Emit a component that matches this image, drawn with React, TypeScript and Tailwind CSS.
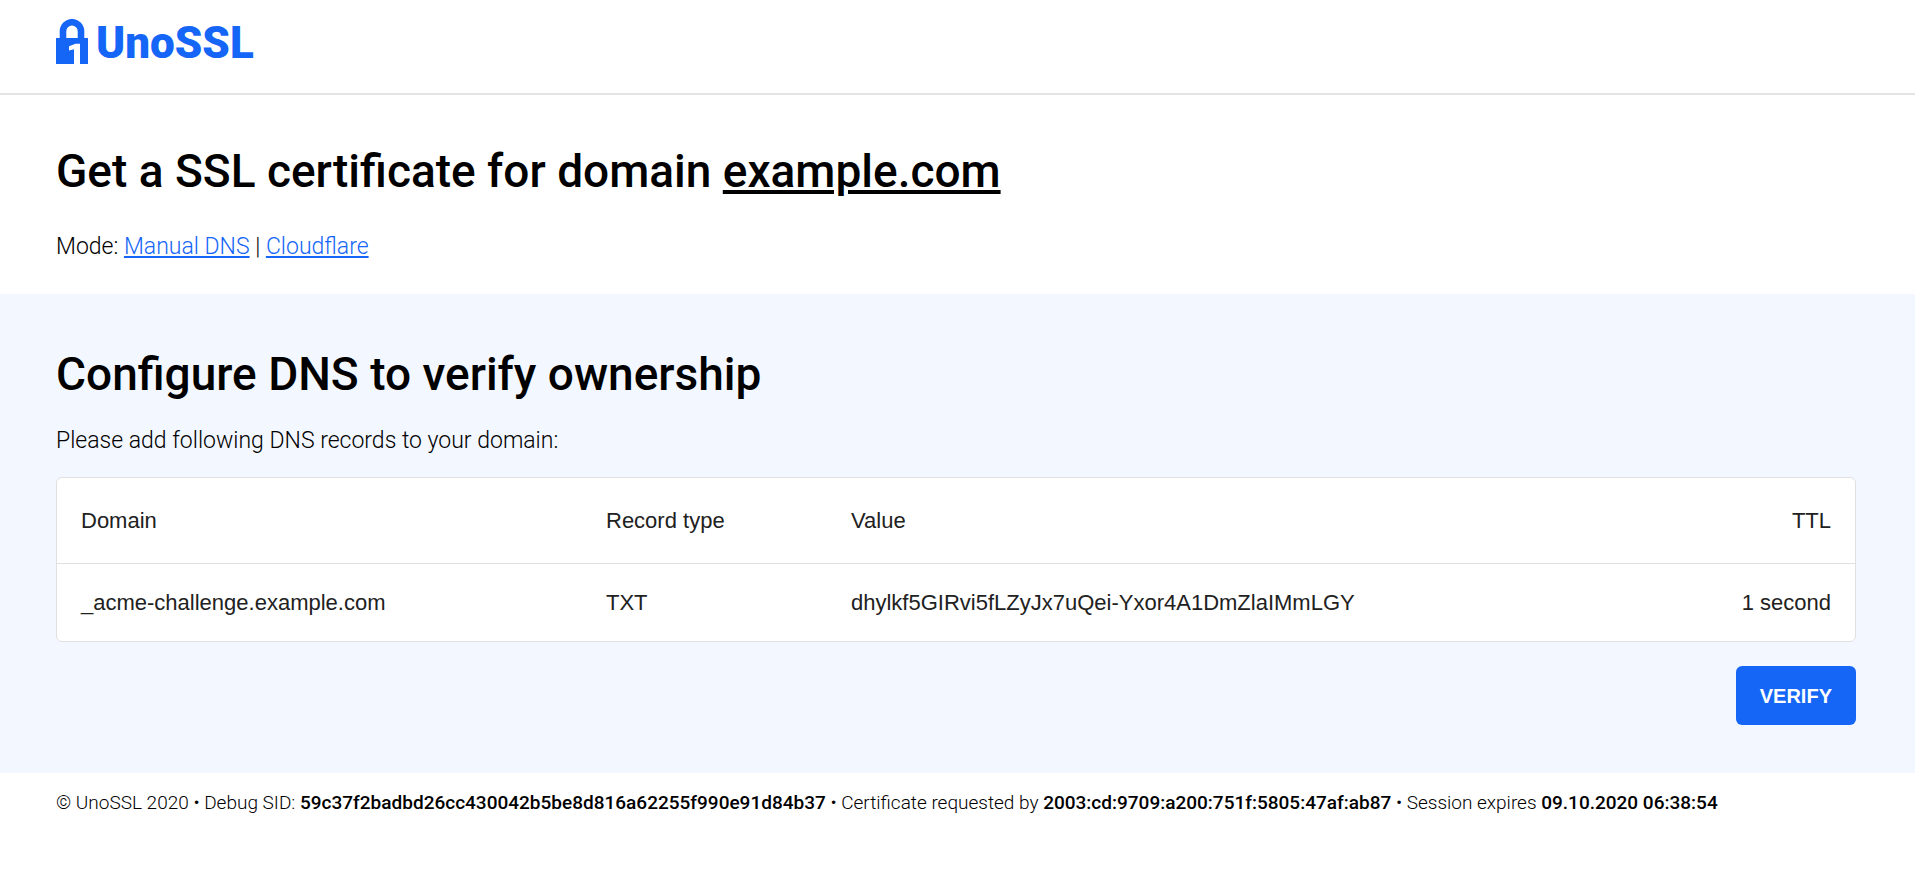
type DnsRecord = { domain: string; type: string; value: string; ttl: string }

const records: DnsRecord[] = [
  {
    domain: '_acme-challenge.example.com',
    type: 'TXT',
    value: 'dhylkf5GIRvi5fLZyJx7uQei-Yxor4A1DmZlaIMmLGY',
    ttl: '1 second',
  },
]

function LockLogo() {
  return (
    <svg className="mt-1" width="32" height="45" viewBox="0 0 32 45" aria-hidden="true">
      <path d="M7 20v-7.8a9 9 0 0 1 18 0V20" fill="none" stroke="#1566f7" strokeWidth="6.6" />
      <path d="M0 19h32v26H0z" fill="#1566f7" />
      <path d="M18 45V30.3l-5 1.2v-4.2l6.6-2.6H24V45z" fill="#fff" />
    </svg>
  )
}

export default function App() {
  return (
    <div className="min-h-svh bg-white font-['Roboto',sans-serif] text-black">
      {/* Header */}
      <header className="flex border-b-2 border-[#e4e4e4] px-14 pt-[15px] pb-[22px]">
        <a href="#" className="flex items-start gap-2 text-[#1566f7]">
          <LockLogo />
          <span className="text-[44px] leading-[56px] font-black">UnoSSL</span>
        </a>
      </header>

      {/* Domain */}
      <section className="px-14 pt-12 pb-[29px]">
        <h1 className="text-[46px] leading-[56px] font-medium">
          Get a SSL certificate for domain <span className="underline">example.com</span>
        </h1>
        <p className="mt-[30px] text-[23px] leading-9 font-light">
          Mode: <a href="#" className="text-[#1566f7] underline">Manual DNS</a> |{' '}
          <a href="#" className="text-[#1566f7] underline">Cloudflare</a>
        </p>
      </section>

      {/* DNS records */}
      <section className="bg-[#f3f7ff] pt-[52px] pr-[59px] pb-12 pl-14">
        <h2 className="text-[46px] leading-[56px] font-medium">Configure DNS to verify ownership</h2>
        <p className="mt-[21px] text-[23px] leading-9 font-light">Please add following DNS records to your domain:</p>

        <div className="mt-[18px] overflow-hidden rounded-md border border-[#e0e0e0] bg-white">
          <table className="w-full font-['Liberation_Sans',Arial,sans-serif] text-[22px] text-[#212121]">
            <thead>
              <tr className="h-[85px] text-left">
                <th className="w-[525px] px-6 font-normal">Domain</th>
                <th className="w-[245px] px-6 font-normal">Record type</th>
                <th className="px-6 font-normal">Value</th>
                <th className="px-6 text-right font-normal">TTL</th>
              </tr>
            </thead>
            <tbody>
              {records.map(r => (
                <tr key={r.domain} className="h-[78px] border-t border-[#e0e0e0]">
                  <td className="px-6">{r.domain}</td>
                  <td className="px-6">{r.type}</td>
                  <td className="px-6">{r.value}</td>
                  <td className="px-6 text-right">{r.ttl}</td>
                </tr>
              ))}
            </tbody>
          </table>
        </div>

        <div className="mt-6 flex justify-end">
          <button className="h-[59px] rounded-md bg-[#1566f7] px-6 font-['Liberation_Sans',Arial,sans-serif] text-xl font-bold text-white">
            VERIFY
          </button>
        </div>
      </section>

      {/* Footer */}
      <footer className="px-14 py-4 text-[19px] leading-7 font-light">
        © UnoSSL 2020 • Debug SID: <b className="font-medium">59c37f2badbd26cc430042b5be8d816a62255f990e91d84b37</b> •
        Certificate requested by <b className="font-medium">2003:cd:9709:a200:751f:5805:47af:ab87</b> • Session expires{' '}
        <b className="font-medium">09.10.2020 06:38:54</b>
      </footer>
    </div>
  )
}
